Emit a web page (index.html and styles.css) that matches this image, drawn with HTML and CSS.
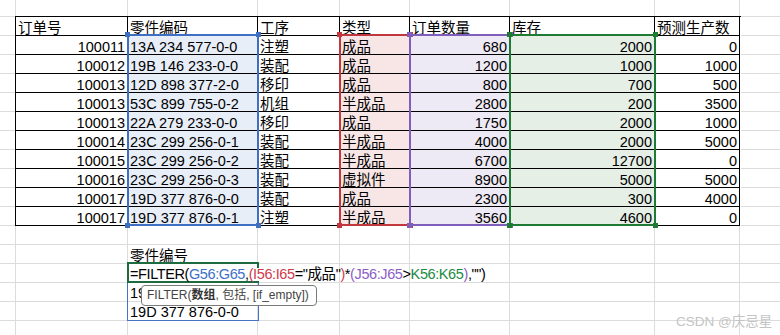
FILE: index.html
```html
<!DOCTYPE html>
<html lang="zh">
<head>
<meta charset="utf-8">
<title>FILTER</title>
<link rel="stylesheet" href="styles.css">
</head>
<body>
<div class="sheet">
  <div class="tbl">
    <div class="c">订单号</div><div class="c">零件编码</div><div class="c">工序</div><div class="c">类型</div><div class="c">订单数量</div><div class="c">库存</div><div class="c">预测生产数</div>

    <div class="c r">100011</div><div class="c fb">13A 234 577-0-0</div><div class="c">注塑</div><div class="c fr">成品</div><div class="c r fp">680</div><div class="c r fg">2000</div><div class="c r">0</div>
    <div class="c r">100012</div><div class="c fb">19B 146 233-0-0</div><div class="c">装配</div><div class="c fr">成品</div><div class="c r fp">1200</div><div class="c r fg">1000</div><div class="c r">1000</div>
    <div class="c r">100013</div><div class="c fb">12D 898 377-2-0</div><div class="c">移印</div><div class="c fr">成品</div><div class="c r fp">800</div><div class="c r fg">700</div><div class="c r">500</div>
    <div class="c r">100013</div><div class="c fb">53C 899 755-0-2</div><div class="c">机组</div><div class="c fr">半成品</div><div class="c r fp">2800</div><div class="c r fg">200</div><div class="c r">3500</div>
    <div class="c r">100013</div><div class="c fb">22A 279 233-0-0</div><div class="c">移印</div><div class="c fr">成品</div><div class="c r fp">1750</div><div class="c r fg">2000</div><div class="c r">1000</div>
    <div class="c r">100014</div><div class="c fb">23C 299 256-0-1</div><div class="c">装配</div><div class="c fr">半成品</div><div class="c r fp">4000</div><div class="c r fg">2000</div><div class="c r">5000</div>
    <div class="c r">100015</div><div class="c fb">23C 299 256-0-2</div><div class="c">装配</div><div class="c fr">半成品</div><div class="c r fp">6700</div><div class="c r fg">12700</div><div class="c r">0</div>
    <div class="c r">100016</div><div class="c fb">23C 299 256-0-3</div><div class="c">装配</div><div class="c fr">虚拟件</div><div class="c r fp">8900</div><div class="c r fg">5000</div><div class="c r">5000</div>
    <div class="c r">100017</div><div class="c fb">19D 377 876-0-0</div><div class="c">装配</div><div class="c fr">成品</div><div class="c r fp">2300</div><div class="c r fg">300</div><div class="c r">4000</div>
    <div class="c r">100017</div><div class="c fb">19D 377 876-0-1</div><div class="c">注塑</div><div class="c fr">半成品</div><div class="c r fp">3560</div><div class="c r fg">4600</div><div class="c r">0</div>
  </div>

  <div class="below">
    <div class="label">零件编号</div>
    <div class="fcell"><span class="k">=FILTER(</span><span class="rb">G56:G65</span>,<span class="rr">(I56:I65</span>="成品"<span class="rr">)</span>*<span class="rp">(J56:J65</span>&gt;<span class="rg">K56:K65</span><span class="rp">)</span>,"")</div>
    <div class="spill">
      <div class="srow">19B 146 233-0-0</div>
      <div class="srow">19D 377 876-0-0</div>
    </div>
  </div>

  <div class="range blue"><i class="h tl"></i><i class="h tr"></i><i class="h bl"></i><i class="h br"></i></div>
  <div class="range red"><i class="h tl"></i><i class="h tr"></i><i class="h bl"></i><i class="h br"></i></div>
  <div class="range purple"><i class="h tl"></i><i class="h tr"></i><i class="h bl"></i><i class="h br"></i></div>
  <div class="range green"><i class="h tl"></i><i class="h tr"></i><i class="h bl"></i><i class="h br"></i></div>

  <div class="tip">FILTER(<b>数组</b>, 包括, [if_empty])</div>
  <div class="mark">CSDN @庆忌星</div>
</div>
</body>
</html>
```
FILE: styles.css
```css
html, body {
  margin: 0;
  padding: 0;
  background: #fff;
}

.sheet {
  position: relative;
  width: 780px;
  height: 335px;
  overflow: hidden;
  font-family: "Liberation Sans", "Noto Sans CJK SC", sans-serif;
  font-size: 14.5px;
  color: #000;
  background:
    linear-gradient(#dcdcdc, #dcdcdc) 15px 0 / 1px 100% no-repeat,
    linear-gradient(#dcdcdc, #dcdcdc) 127px 0 / 1px 100% no-repeat,
    linear-gradient(#dcdcdc, #dcdcdc) 257px 0 / 1px 100% no-repeat,
    linear-gradient(#dcdcdc, #dcdcdc) 339px 0 / 1px 100% no-repeat,
    linear-gradient(#dcdcdc, #dcdcdc) 409px 0 / 1px 100% no-repeat,
    linear-gradient(#dcdcdc, #dcdcdc) 509px 0 / 1px 100% no-repeat,
    linear-gradient(#dcdcdc, #dcdcdc) 654px 0 / 1px 100% no-repeat,
    linear-gradient(#dcdcdc, #dcdcdc) 739px 0 / 1px 100% no-repeat,
    linear-gradient(#dcdcdc 1px, transparent 1px) 0 16px / 100% 19px repeat-y,
    #fff;
}

/* data table */
.tbl {
  margin: 16px 0 0 15px;
  width: 725px;
  display: grid;
  grid-template-columns: 112px 130px 82px 70px 100px 145px 85px;
  grid-auto-rows: 19px;
  border-left: 1px solid #000;
  border-top: 1px solid #000;
  background: #fff;
}

.c {
  box-sizing: border-box;
  border-right: 1px solid #000;
  border-bottom: 1px solid #000;
  padding: 2px 2px 0 2px;
  line-height: 18px;
  white-space: nowrap;
  overflow: visible;
}

.r { text-align: right; }
.fb { background: #e8eef8; }
.fr { background: #f8e6e6; }
.fp { background: #eeeaf5; }
.fg { background: #e5efe6; }

/* colour-coded reference ranges */
.range {
  position: absolute;
  top: 34px;
  height: 192px;
  box-sizing: border-box;
  border: 2px solid;
}
.range.blue   { left: 127px; width: 132px; border-color: #3f6fc2; }
.range.red    { left: 339px; width: 72px;  border-color: #c2373d; }
.range.purple { left: 409px; width: 102px; border-color: #7f5dbb; }
.range.green  { left: 509px; width: 147px; border-color: #1f7a33; }

.h {
  position: absolute;
  width: 5px;
  height: 5px;
}
.blue .h   { background: #3f6fc2; }
.red .h    { background: #c2373d; }
.purple .h { background: #7f5dbb; }
.green .h  { background: #1f7a33; }
.h.tl { left: -4px; top: -4px; }
.h.tr { right: -4px; top: -4px; }
.h.bl { left: -4px; bottom: -4px; }
.h.br { right: -4px; bottom: -4px; }

/* formula area */
.below {
  margin: 18px 0 0 127px;
  width: 132px;
}

.label {
  box-sizing: border-box;
  height: 18px;
  padding: 3px 0 0 3px;
  line-height: 18px;
  white-space: nowrap;
}

.fcell {
  position: relative;
  box-sizing: border-box;
  height: 21px;
  width: 132px;
  border: 2px solid #1e6b3f;
  border-right: 0;
  padding: 2px 0 0 1px;
  line-height: 17px;
  white-space: nowrap;
  letter-spacing: -0.4px;
  background: #fff;
}
.fcell::after {
  content: "";
  position: absolute;
  right: 0;
  top: -2px;
  width: 2px;
  height: 6px;
  background: #1e6b3f;
}

.rb { color: #3d70c8; }
.rr { color: #d0394a; }
.rp { color: #8b5ec4; }
.rg { color: #1c8a3f; }

.spill {
  box-sizing: border-box;
  height: 38px;
  width: 132px;
  border: 1px solid #4472c4;
  border-top: 0;
}

.srow {
  box-sizing: border-box;
  height: 19px;
  padding: 1px 0 0 2px;
  line-height: 18px;
  white-space: nowrap;
}

/* function tooltip */
.tip {
  position: absolute;
  left: 141px;
  top: 285px;
  box-sizing: border-box;
  width: 176px;
  height: 21px;
  border: 1px solid #7a7a7a;
  border-radius: 4px;
  background: #fff;
  padding: 0 0 0 5px;
  font-size: 12px;
  line-height: 19px;
  color: #444;
  white-space: nowrap;
}
.tip b { font-weight: 700; color: #333; }

.mark {
  position: absolute;
  left: 676px;
  top: 313px;
  font-size: 13.5px;
  line-height: 18px;
  color: #c4c4c4;
  white-space: nowrap;
}
```
